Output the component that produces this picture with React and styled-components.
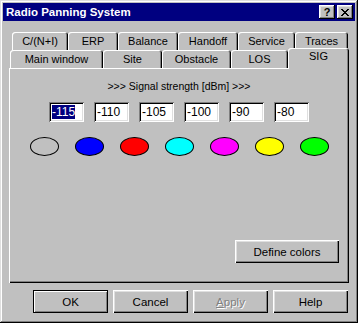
import styled, { createGlobalStyle } from "styled-components";

const GlobalStyle = createGlobalStyle`
  html, body {
    margin: 0;
    padding: 0;
    background: #c0c0c0;
  }
  body {
    font-family: "Liberation Sans", Arial, sans-serif;
    font-size: 11px;
    color: #000;
  }
`;

const backTabs = [
  { label: "C/(N+I)", width: 56 },
  { label: "ERP", width: 50 },
  { label: "Balance", width: 60 },
  { label: "Handoff", width: 60 },
  { label: "Service", width: 57 },
  { label: "Traces", width: 53 },
];

const frontTabs = [
  { label: "Main window", width: 93 },
  { label: "Site", width: 59 },
  { label: "Obstacle", width: 69 },
  { label: "LOS", width: 57 },
  { label: "SIG", width: 61, active: true },
];

const levels = ["-115", "-110", "-105", "-100", "-90", "-80"];
const colors = ["#c0c0c0", "#0000ff", "#ff0000", "#00ffff", "#ff00ff", "#ffff00", "#00ff00"];

const App = () => {
  return (
    <>
      <GlobalStyle />
      <Window>
        <TitleBar>
          <Title>Radio Panning System</Title>
          <TitleButtons>
            <TitleButton>?</TitleButton>
            <TitleButton>
              <svg width="8" height="7" viewBox="0 0 8 7">
                <path d="M0 0h2v1h-2zM6 0h2v1h-2zM1 1h2v1h-2zM5 1h2v1h-2zM2 2h4v1h-4zM3 3h2v1h-2zM2 4h4v1h-4zM1 5h2v1h-2zM5 5h2v1h-2zM0 6h2v1h-2zM6 6h2v1h-2z" fill="#000" />
              </svg>
            </TitleButton>
          </TitleButtons>
        </TitleBar>

        <Body>
          <Tabs>
            <BackRow>
              {backTabs.map((t) => (
                <Tab key={t.label} style={{ width: t.width }}>
                  {t.label}
                </Tab>
              ))}
            </BackRow>
            <FrontRow>
              {frontTabs.map((t) => (
                <Tab key={t.label} $active={t.active} style={{ width: t.width }}>
                  {t.label}
                </Tab>
              ))}
            </FrontRow>
          </Tabs>

          <Panel>
            <Caption>&gt;&gt;&gt; Signal strength [dBm] &gt;&gt;&gt;</Caption>
            <FieldRow>
              {levels.map((v, i) => (
                <Field key={v}>
                  {i === 0 ? <Selected>{v}</Selected> : v}
                </Field>
              ))}
            </FieldRow>
            <SwatchRow>
              {colors.map((c, i) => (
                <Swatch key={i} $color={c} />
              ))}
            </SwatchRow>
            <PanelFooter>
              <Button $width={104}>Define colors</Button>
            </PanelFooter>
          </Panel>

          <ButtonRow>
            <Button $default>OK</Button>
            <Button>Cancel</Button>
            <Button $disabled>
              <u>A</u>pply
            </Button>
            <Button>Help</Button>
          </ButtonRow>
        </Body>
      </Window>
    </>
  );
};

export default App;

const Window = styled.div`
  width: 358px;
  height: 323px;
  box-sizing: border-box;
  padding: 3px;
  background: #c0c0c0;
  display: flex;
  flex-direction: column;
  box-shadow: inset -1px -1px #000, inset 1px 1px #dfdfdf,
    inset -2px -2px #808080, inset 2px 2px #fff;
`;

const TitleBar = styled.div`
  height: 18px;
  background: #000080;
  display: flex;
  align-items: center;
  justify-content: space-between;
  padding: 0 2px 0 3px;
`;

const Title = styled.div`
  color: #fff;
  font-weight: bold;
  font-size: 11.5px;
`;

const TitleButtons = styled.div`
  display: flex;
  gap: 2px;
`;

const TitleButton = styled.div`
  width: 16px;
  height: 14px;
  box-sizing: border-box;
  background: #c0c0c0;
  display: flex;
  align-items: center;
  justify-content: center;
  font-weight: bold;
  font-size: 11px;
  line-height: 1;
  box-shadow: inset -1px -1px #000, inset 1px 1px #fff,
    inset -2px -2px #808080, inset 2px 2px #dfdfdf;
`;

const Body = styled.div`
  flex: 1;
  display: flex;
  flex-direction: column;
  padding: 11px 6px 0 6px;
`;

const Tabs = styled.div`
  display: flex;
  flex-direction: column;
`;

const BackRow = styled.div`
  display: flex;
  padding-left: 3px;
  height: 18px;
`;

const FrontRow = styled.div`
  display: flex;
  align-items: flex-end;
  padding-left: 1px;
  height: 21px;
  margin-top: -3px;
  position: relative;
  z-index: 1;
`;

const Tab = styled.div`
  box-sizing: border-box;
  height: ${(p) => (p.$active ? "21px" : "18px")};
  margin-bottom: ${(p) => (p.$active ? "-1px" : "0")};
  padding-top: ${(p) => (p.$active ? "2px" : "3px")};
  background: #c0c0c0;
  text-align: center;
  line-height: 13px;
  border-radius: 3px 3px 0 0;
  box-shadow: inset 1px 1px #fff, inset -1px 0 #000, inset -2px 0 #808080;
  position: relative;
  z-index: ${(p) => (p.$active ? 2 : 0)};
`;

const Panel = styled.div`
  height: 215px;
  box-sizing: border-box;
  display: flex;
  flex-direction: column;
  align-items: center;
  padding: 12px 10px 20px;
  box-shadow: inset 1px 1px #fff, inset -1px -1px #000,
    inset -2px -2px #808080;
`;

const Caption = styled.div`
  line-height: 13px;
  font-size: 10.5px;
`;

const FieldRow = styled.div`
  display: flex;
  gap: 10px;
  margin-top: 9px;
`;

const Field = styled.div`
  width: 35px;
  height: 20px;
  box-sizing: border-box;
  background: #fff;
  padding: 3px 0 0 3px;
  line-height: 14px;
  font-size: 12px;
  box-shadow: inset 1px 1px #808080, inset -1px -1px #fff,
    inset 2px 2px #000, inset -2px -2px #dfdfdf;
`;

const Selected = styled.span`
  background: #000080;
  color: #fff;
`;

const SwatchRow = styled.div`
  display: flex;
  gap: 16px;
  margin-top: 15px;
`;

const Swatch = styled.div`
  width: 29px;
  height: 19px;
  box-sizing: border-box;
  border: 1px solid #000;
  border-radius: 50%;
  background: ${(p) => p.$color};
`;

const PanelFooter = styled.div`
  margin-top: auto;
  align-self: stretch;
  display: flex;
  justify-content: flex-end;
`;

const ButtonRow = styled.div`
  display: flex;
  justify-content: flex-end;
  gap: 5px;
  margin-top: 7px;
  padding-right: 1px;
`;

const Button = styled.div`
  width: ${(p) => p.$width || 75}px;
  height: 23px;
  box-sizing: border-box;
  display: flex;
  align-items: center;
  justify-content: center;
  font-size: 11.5px;
  background: #c0c0c0;
  color: ${(p) => (p.$disabled ? "#808080" : "#000")};
  text-shadow: ${(p) => (p.$disabled ? "1px 1px #fff" : "none")};
  box-shadow: ${(p) =>
    p.$default
      ? "inset 1px 1px #000, inset -1px -1px #000, inset 2px 2px #fff, inset -2px -2px #808080"
      : "inset 1px 1px #fff, inset -1px -1px #000, inset -2px -2px #808080, inset 2px 2px #dfdfdf"};
`;
